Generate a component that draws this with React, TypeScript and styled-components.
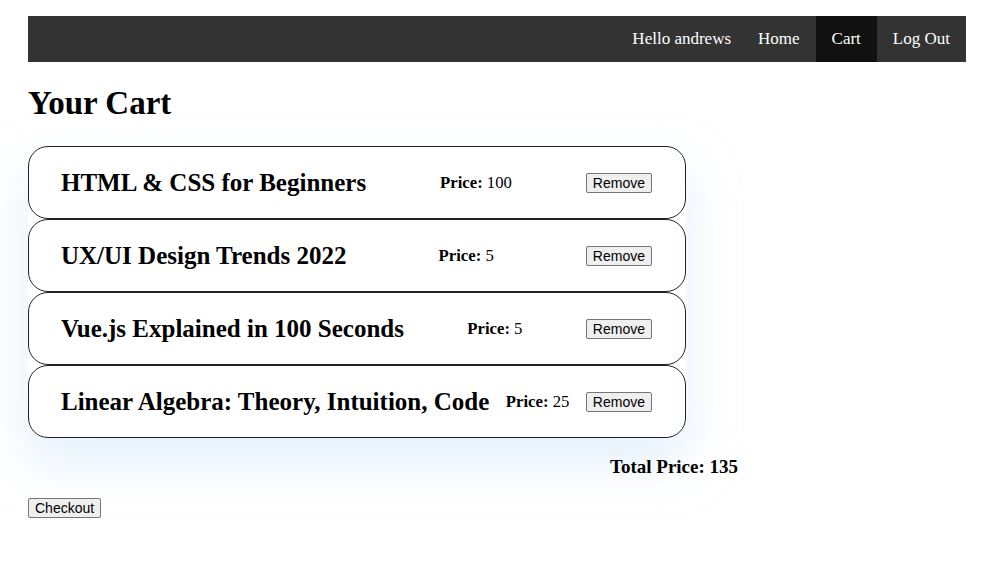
import React from "react";
import styled, { createGlobalStyle } from "styled-components";

const Global = createGlobalStyle`
  html, body { margin: 0; padding: 0; background: #ffffff; }
  body { font-family: "Liberation Serif", "Times New Roman", serif; color: #000; }
`;

const Page = styled.div`
  padding: 16px 30px 40px 28px;
`;

const NavBar = styled.nav`
  display: flex;
  justify-content: flex-end;
  align-items: stretch;
  background: #333333;
  height: 46px;
`;

const NavItem = styled.a<{ $active?: boolean; $greeting?: boolean }>`
  display: flex;
  align-items: center;
  padding: ${(p) => (p.$greeting ? "0 11px 0 16px" : "0 16px")};
  color: #ffffff;
  font-size: 17px;
  text-decoration: none;
  background: ${(p) => (p.$active ? "#111111" : "transparent")};
`;

const Title = styled.h1`
  font-size: 33px;
  font-weight: bold;
  margin: 23px 0 24px 0;
  line-height: 37px;
`;

const CardList = styled.div`
  width: 658px;
  display: flex;
  flex-direction: column;
  box-shadow: 0 24px 50px rgba(205, 228, 250, 0.55);
  border-radius: 20px;
`;

const Card = styled.div`
  box-sizing: border-box;
  height: 73px;
  border: 1px solid #222;
  border-radius: 20px;
  background: #ffffff;
  display: flex;
  align-items: center;
  justify-content: space-between;
  padding: 0 33px 0 32px;
`;

const ItemName = styled.h2`
  margin: 0;
  font-size: 25px;
  font-weight: bold;
`;

const Price = styled.p`
  margin: 0;
  font-size: 16.7px;
`;

const Btn = styled.button`
  font-family: "Liberation Sans", Arial, sans-serif;
  font-size: 14px;
  padding: 1px 6px;
  border: 1px solid #767676;
  border-radius: 2px;
  background: #efefef;
  color: #000;
  line-height: 16px;
`;

const TotalRow = styled.div`
  padding-left: 582px;
  margin-top: 19px;
  font-size: 19px;
  font-weight: bold;
  line-height: 20px;
`;

const CheckoutRow = styled.div`
  margin-top: 21px;
`;

const items = [
  { name: "HTML & CSS for Beginners", price: 100 },
  { name: "UX/UI Design Trends 2022", price: 5 },
  { name: "Vue.js Explained in 100 Seconds", price: 5 },
  { name: "Linear Algebra: Theory, Intuition, Code", price: 25 },
];

export default function App() {
  const total = items.reduce((s, i) => s + i.price, 0);
  return (
    <Page>
      <Global />
      <NavBar>
        <NavItem $greeting>Hello andrews</NavItem>
        <NavItem>Home</NavItem>
        <NavItem $active>Cart</NavItem>
        <NavItem>Log Out</NavItem>
      </NavBar>
      <Title>Your Cart</Title>
      <CardList>
        {items.map((it) => (
          <Card key={it.name}>
            <ItemName>{it.name}</ItemName>
            <Price>
              <b>Price:</b> {it.price}
            </Price>
            <Btn>Remove</Btn>
          </Card>
        ))}
      </CardList>
      <TotalRow>Total Price: {total}</TotalRow>
      <CheckoutRow>
        <Btn>Checkout</Btn>
      </CheckoutRow>
    </Page>
  );
}
